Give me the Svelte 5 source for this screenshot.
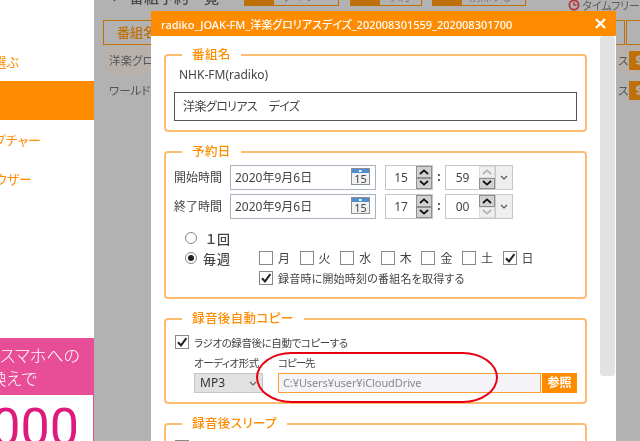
<script>
  const days = [
    { d: '月', on: false }, { d: '火', on: false }, { d: '水', on: false }, { d: '木', on: false },
    { d: '金', on: false }, { d: '土', on: false }, { d: '日', on: true }
  ];
  const times = [
    { date: '2020年9月6日', label: '開始時間', h: '15', m: '59', upOff: true, downOff: false },
    { date: '2020年9月6日', label: '終了時間', h: '17', m: '00', upOff: false, downOff: true }
  ];
</script>

{#snippet check()}
  <svg class="tick" viewBox="0 0 12 12"><path d="M2 6.2 L5 9.4 L10.4 2.2" fill="none" stroke="#222" stroke-width="2"/></svg>
{/snippet}

{#snippet spin(off, flip)}
  <span class="spin" class:off>
    <svg viewBox="0 0 10 6" class:flip><path d="M1 5 L5 1.4 L9 5" fill="none" stroke="currentColor" stroke-width="1.8"/></svg>
  </span>
{/snippet}

<div class="page">
  <aside class="side">
    <div class="item"><span class="clip w19">番組を選ぶ</span></div>
    <div class="item band"></div>
    <div class="item"><span class="clip w41">キャプチャー</span></div>
    <div class="item"><span class="clip w32">ブラウザー</span></div>
    <div class="spacer"></div>
    <div class="banner">
      <span class="clip w80">今すぐスマホへの</span>
      <span class="clip w37">乗り換えで</span>
    </div>
    <div class="digits"><span class="clip w79">1000</span></div>
  </aside>

  <main class="main">
    <div class="toolbar">
      <h1>← 番組予約一覧</h1>
      <div class="tbtn b1"><span class="ti"></span><span class="tl">すべて</span></div>
      <div class="tbtn b2"><span class="ti"></span><span class="tl">予約</span></div>
      <div class="tbtn b3"><span class="ti"></span><span class="tl">削除する</span></div>
      <div class="free">
        <svg viewBox="0 0 12 12"><circle cx="6" cy="6" r="4.6" fill="none" stroke="#b8343a" stroke-width="1.8"/><path d="M6 3v3h2.6" fill="none" stroke="#b8343a" stroke-width="1.3"/></svg>
        タイムフリー
      </div>
    </div>
    <div class="thead">
      <div class="th wide">番組名</div>
      <div class="th">変更</div>
    </div>
    <div class="tr shade"><span class="tname">洋楽グロリアス</span><span class="tend">ス</span><span class="obtn">$</span></div>
    <div class="tr"><span class="tname">ワールドロック</span><span class="tend">ス</span><span class="obtn">$</span></div>
  </main>

  <section class="modal">
    <header class="mhead">
      <span>radiko_JOAK-FM_洋楽グロリアスデイズ_202008301559_202008301700</span>
      <svg viewBox="0 0 12 12"><path d="M1 1 L11 11 M11 1 L1 11" stroke="#fff" stroke-width="2.4"/></svg>
    </header>
    <div class="mbody">
      <div class="content">
        <fieldset class="box">
          <legend>番組名</legend>
          <div class="station">NHK-FM(radiko)</div>
          <div class="title-input">洋楽グロリアス　デイズ</div>
        </fieldset>

        <fieldset class="box">
          <legend>予約日</legend>
          <div class="dates">
            {#each times as t}
              <div class="date-row">
                <span class="dlabel">{t.label}</span>
                <div class="date-input">
                  {t.date}
                  <svg viewBox="0 0 19 17" class="cal">
                    <rect x=".5" y=".5" width="18" height="16" fill="#f1f1f1" stroke="#8a8f96"/>
                    <rect x="1" y="1" width="17" height="4" fill="#4f8fd0"/>
                    <rect x="8" y="2" width="2.5" height="2" fill="#fff"/>
                    <text x="9.5" y="15" text-anchor="middle" class="caltext">15</text>
                  </svg>
                </div>
                <div class="tbox">
                  <span class="tval">{t.h}</span>
                  <span class="spins">{@render spin(false, false)}{@render spin(false, true)}</span>
                </div>
                <span class="colon">:</span>
                <div class="tbox">
                  <span class="tval">{t.m}</span>
                  <span class="spins">{@render spin(t.upOff, false)}{@render spin(t.downOff, true)}</span>
                </div>
                <div class="drop">
                  <svg viewBox="0 0 8 5"><path d="M1 1 L4 4 L7 1" fill="none" stroke="#555" stroke-width="1.2"/></svg>
                </div>
              </div>
            {/each}
          </div>
          <div class="repeat">
            <div class="radio-row one"><span class="radio"></span><span class="rtext">１回</span></div>
            <div class="line"></div>
            <div class="radio-row"><span class="radio on"></span><span class="rtext">毎週</span></div>
            <div class="line days">
              {#each days as x}
                <span class="day"><span class="cb">{#if x.on}{@render check()}{/if}</span>{x.d}</span>
              {/each}
            </div>
            <div></div>
            <div class="line get"><span class="cb">{@render check()}</span>録音時に開始時刻の番組名を取得する</div>
          </div>
        </fieldset>

        <fieldset class="box">
          <legend>録音後自動コピー</legend>
          <div class="chk-row"><span class="cb">{@render check()}</span>ラジオの録音後に自動でコピーする</div>
          <div class="copy-labels"><span class="fmt">オーディオ形式</span><span class="dest">コピー先</span></div>
          <div class="copy-controls">
            <div class="select">MP3<svg viewBox="0 0 8 5"><path d="M1 1 L4 4 L7 1" fill="none" stroke="#666" stroke-width="1.2"/></svg></div>
            <div class="path">C:¥Users¥user¥iCloudDrive</div>
            <div class="browse">参照</div>
          </div>
        </fieldset>

        <fieldset class="box">
          <legend>録音後スリープ</legend>
          <div class="chk-row"><span class="cb"></span>録音後にPCをスリープする</div>
        </fieldset>
      </div>
      <div class="scroll"><div class="thumb"></div></div>
    </div>
    <div class="ring"></div>
  </section>
</div>

<style>
  :global(body) { margin: 0; background: #fff; }
  .page {
    position: relative;
    display: flex;
    width: 640px;
    height: 441px;
    overflow: hidden;
    font-family: "Noto Sans", "Noto Sans CJK JP", sans-serif;
    font-feature-settings: "palt";
    color: #444;
    filter: blur(0.35px);
  }

  .side { width: 94px; flex: none; display: flex; flex-direction: column; padding-top: 42px; box-sizing: border-box; background: #fff; }
  .item { height: 39px; display: flex; align-items: center; color: #ff8c00; font-size: 13px; }
  .band { background: #ff8c00; }
  .clip { display: flex; justify-content: flex-end; overflow: hidden; white-space: nowrap; flex: none; }
  .w19 { width: 19px; } .w41 { width: 41px; } .w32 { width: 32px; }
  .w80 { width: 80px; } .w37 { width: 37px; } .w79 { width: 79px; }
  .spacer { flex: 1; }
  .banner { height: 57px; background: #e84d97; color: #fff; font-size: 17px; line-height: 23px; font-weight: 300; padding-top: 6px; box-sizing: border-box; }
  .digits { height: 46px; border-right: 1px solid #e84d97; overflow: hidden; color: #de1a7d; font: 400 52px/1 Roboto, sans-serif; padding-top: 7px; box-sizing: border-box; }

  .main { flex: 1; min-width: 0; background: #b2b2b2; padding-left: 9px; overflow: hidden; }
  .toolbar { position: relative; height: 20px; display: flex; color: #555; }
  .toolbar h1 { margin: -13px 0 0 7px; width: 136px; height: 20px; font-size: 15px; line-height: 20px; font-weight: 500; white-space: nowrap; color: #4a4a4a; }
  .tbtn { height: 7px; margin-top: -1px; display: flex; border: 1px solid #bf7008; box-sizing: border-box; }
  .ti { width: 29px; background: #bf7008; }
  .tl { font-size: 11px; line-height: 1; margin: -9px 0 0 8px; overflow: hidden; white-space: nowrap; color: #777; }
  .b1 { width: 96px; } .b2 { width: 73px; margin-left: 11px; } .b3 { width: 96px; margin-left: 10px; }
  .free { margin: -3px 0 0 42px; font-size: 11px; display: flex; align-items: center; gap: 2px; height: 16px; white-space: nowrap; color: #5c5c5c; }
  .free svg { width: 12px; height: 12px; }

  .thead { display: flex; height: 25px; gap: 1px; }
  .th { border: 1px solid #bf7008; color: #bf7008; font-size: 13px; font-weight: 500; line-height: 23px; padding-left: 13px; box-sizing: border-box; width: 60px; white-space: nowrap; }
  .th.wide { width: 522px; flex: none; }
  .tr { height: 30px; display: flex; align-items: center; font-size: 11.5px; color: #555; }
  .shade { background: #b6b1ac; }
  .tname { width: 48px; margin-right: 467px; padding-left: 6px; box-sizing: border-box; flex: none; white-space: nowrap; overflow: hidden; }
  .tend { width: 5px; flex: none; }
  .obtn { width: 20px; height: 19px; margin-left: 6px; flex: none; background: #bf7008; color: #b2b2b2; font-weight: 700; font-size: 13px; text-align: center; line-height: 19px; }

  .modal { position: absolute; left: 151px; top: 11px; width: 465px; height: 430px; background: #fff; display: flex; flex-direction: column; }
  .mhead { height: 25px; flex: none; background: #ff8c00; color: #fff; font-size: 11px; font-weight: 500; display: flex; align-items: center; justify-content: space-between; padding: 0 10px; box-sizing: border-box; white-space: nowrap; }
  .mhead svg { width: 11px; height: 11px; }
  .mbody { flex: 1; display: flex; min-height: 0; overflow: hidden; }
  .content { width: 449px; flex: none; padding: 11px 0 0 13px; box-sizing: border-box; display: flex; flex-direction: column; gap: 12px; }
  .box { margin: 0; padding: 0 8px 9px; width: 423px; box-sizing: border-box; border: 2px solid #ffbb70; border-radius: 4px; min-width: 0; flex: none; }
  legend { margin-left: 8px; padding: 0 10px; font-size: 12.5px; line-height: 16px; font-weight: 500; color: #ff8c00; letter-spacing: .4px; }

  .station { margin-top: 2px; height: 20px; line-height: 20px; padding-left: 5px; font-size: 12px; }
  .title-input { margin-top: 7px; height: 29px; border: 1px solid #555; box-sizing: border-box; padding-left: 8px; line-height: 27px; font-size: 12px; letter-spacing: -.6px; }

  .dates { margin-top: 5px; display: flex; flex-direction: column; gap: 4px; }
  .date-row { display: flex; height: 25px; align-items: stretch; font-size: 12px; }
  .dlabel { width: 56px; line-height: 25px; flex: none; }
  .date-input { width: 146px; flex: none; border: 1px solid #a9b4c2; box-sizing: border-box; padding-left: 4px; line-height: 23px; position: relative; }
  .cal { position: absolute; right: 5px; top: 2px; width: 19px; height: 17px; }
  .caltext { font-size: 11px; fill: #444; font-family: "Noto Sans", sans-serif; }
  .tbox { width: 48px; flex: none; margin-left: 9px; border: 1px solid #c4c7cc; box-sizing: border-box; display: flex; }
  .colon + .tbox { margin-left: 0; width: 50px; border-right: 0; }
  .tval { flex: 1; text-align: center; line-height: 23px; }
  .spins { width: 16px; display: flex; flex-direction: column; flex: none; }
  .spin { flex: 1; background: #d2d2d2; border: 1px solid #8f8f8f; color: #111; display: flex; align-items: center; justify-content: center; box-sizing: border-box; }
  .spin.off { background: #eee; border-color: #ddd; color: #b5b5b5; }
  .spin svg { width: 10px; height: 6px; }
  .spin svg.flip { transform: scaleY(-1); }
  .colon { width: 12px; flex: none; text-align: center; line-height: 23px; font-weight: 700; }
  .drop { width: 18px; flex: none; border: 1px solid #c4c7cc; background: #eee; box-sizing: border-box; display: flex; align-items: center; justify-content: center; }
  .drop svg { width: 8px; height: 5px; }

  .repeat { margin-top: 9px; display: grid; grid-template-columns: 85px 1fr; grid-auto-rows: 20px; font-size: 11px; }
  .radio-row { display: flex; align-items: center; padding-left: 11px; font-size: 13px; color: #444; }
  .radio { width: 12px; height: 12px; border-radius: 50%; border: 1px solid #888; box-sizing: border-box; margin-right: 6px; flex: none; position: relative; }
  .one .radio { margin-right: 9px; }
  .radio.on::after { content: ""; position: absolute; inset: 2px; border-radius: 50%; background: #222; }
  .rtext { letter-spacing: 1px; font-weight: 500; }
  .line { display: flex; align-items: center; }
  .days { gap: 0; font-size: 12px; }
  .day { width: 40.6px; display: flex; align-items: center; flex: none; }
  .cb { width: 14px; height: 14px; border: 1px solid #888; box-sizing: border-box; margin-right: 5px; flex: none; display: flex; align-items: center; justify-content: center; background: #fff; }
  .tick { width: 12px; height: 12px; }
  .get { white-space: nowrap; letter-spacing: .2px; }

  .chk-row { margin-top: 6px; height: 18px; display: flex; align-items: center; font-size: 10.5px; letter-spacing: -.4px; padding-left: 1px; white-space: nowrap; }
  .copy-labels { margin-top: 4px; height: 16px; line-height: 16px; font-size: 10.5px; display: flex; padding-left: 20px; }
  .fmt { width: 84px; flex: none; white-space: nowrap; letter-spacing: -.45px; }
  .dest { letter-spacing: -1px; white-space: nowrap; }
  .copy-controls { margin-top: 2px; height: 20px; display: flex; padding-left: 20px; font-size: 12px; }
  .select { width: 69px; flex: none; background: #e1e1e1; border: 1px solid #c6c6c6; box-sizing: border-box; padding-left: 5px; line-height: 18px; margin-right: 15px; position: relative; color: #333; }
  .select svg { position: absolute; right: 5px; top: 7px; width: 8px; height: 5px; }
  .path { flex: 1; border: 1px solid #ff9d2e; background: #f4f4f8; box-sizing: border-box; padding-left: 4px; line-height: 18px; font-size: 11px; letter-spacing: -.1px; color: #8a8a8a; }
  .browse { width: 35px; flex: none; background: #ff8c00; color: #fff; text-align: center; line-height: 20px; font-size: 12px; font-weight: 700; margin-left: 1px; }

  .scroll { width: 16px; flex: none; }
  .thumb { height: 340px; width: 15px; background: #e2e2e2; border-radius: 3px; }

  .ring { position: absolute; left: 105px; top: 341px; width: 242px; height: 51px; border: 2px solid #e60012; border-radius: 36px / 26px; box-sizing: border-box; pointer-events: none; }
</style>
